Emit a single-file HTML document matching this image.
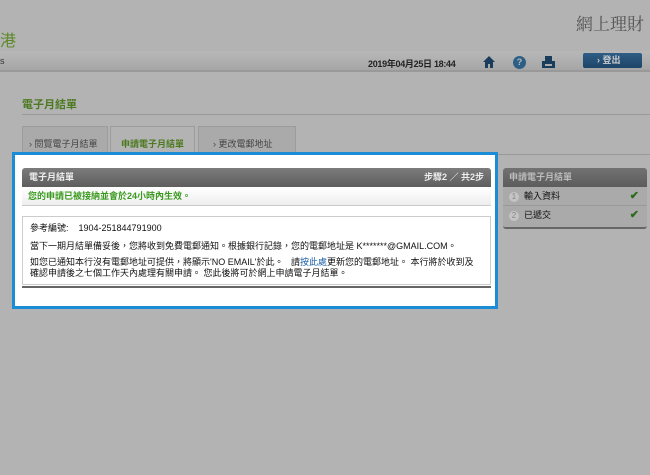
<!DOCTYPE html>
<html><head><meta charset="utf-8"><style>
*{margin:0;padding:0;box-sizing:border-box}
body{width:650px;height:475px;background:#b3b3b3;font-family:"Liberation Sans","Noto Sans CJK TC",sans-serif;font-size:9px;color:#111;position:relative;overflow:hidden}
.a{position:absolute}
</style></head><body>
<div class="a" style="left:576px;top:10px;font-size:17px;color:#555;font-family:'Noto Serif CJK SC',serif">網上理財</div>
<div class="a" style="left:0;top:27px;font-size:16px;color:#5e8a2a">港</div>
<div class="a" style="left:0;top:51px;width:650px;height:21px;background:linear-gradient(#b8b8b8,#a6a6a6);border-bottom:2px solid #999"></div>
<div class="a" style="left:0;top:56px;font-size:9px;color:#333">s</div>
<div class="a" style="left:368px;top:57px;font-size:9px;color:#222;font-weight:bold;letter-spacing:-0.3px">2019年04月25日 18:44</div>
<svg class="a" style="left:482px;top:55px" width="14" height="14" viewBox="0 0 14 14"><path d="M7 1L1 7h2v6h3V9h2v4h3V7h2z" fill="#1a3d5c"/></svg>
<div class="a" style="left:513px;top:56px;width:13px;height:13px;border-radius:50%;background:#2d5f86;color:#bbb;font-size:9px;font-weight:bold;text-align:center;line-height:13px">?</div>
<svg class="a" style="left:542px;top:55px" width="13" height="14" viewBox="0 0 13 14"><rect x="3" y="1" width="7" height="5" fill="#1a3d5c"/><rect x="0" y="6" width="13" height="7" fill="#1a3d5c"/><rect x="3" y="9" width="7" height="2" fill="#aaa"/></svg>
<div class="a" style="left:583px;top:53px;width:59px;height:15px;background:linear-gradient(#2f5d85,#1d4468);border-radius:2px;color:#ccc;font-size:9px;font-weight:bold;padding-left:14px;line-height:15px">› 登出</div>
<div class="a" style="left:22px;top:96px;font-size:11px;color:#4d7a20;font-weight:bold">電子月結單</div>
<div class="a" style="left:22px;top:114px;width:628px;height:1px;background:#999"></div>
<div class="a" style="left:22px;top:126px;width:86px;height:28px;background:#aaa;border:1px solid #9c9c9c;color:#444;font-size:9px;padding:10px 0 0 6px">› 閱覽電子月結單</div>
<div class="a" style="left:110px;top:126px;width:85px;height:28px;background:#b3b3b3;border:1px solid #9c9c9c;border-bottom:none;color:#4d7a20;font-weight:bold;font-size:9px;padding:10px 0 0 10px">申請電子月結單</div>
<div class="a" style="left:198px;top:126px;width:98px;height:28px;background:#aaa;border:1px solid #9c9c9c;color:#444;font-size:9px;padding:10px 0 0 14px">› 更改電郵地址</div>
<div class="a" style="left:497px;top:154px;width:153px;height:1px;background:#999"></div>
<div class="a" style="left:12px;top:152px;width:486px;height:157px;background:#fff;border:3px solid #1b8dd6"></div>
<div class="a" style="left:22px;top:168px;width:469px;height:19px;background:linear-gradient(#7c7c7c,#5e5e5e);border-radius:3px 3px 0 0;color:#eee;font-weight:bold;font-size:9px;line-height:19px;padding:0 7px">電子月結單<span style="float:right">步驟2 ／ 共2步</span></div>
<div class="a" style="left:22px;top:187px;width:469px;height:19px;background:linear-gradient(#fff,#eee);border-bottom:1px solid #ccc;color:#3a9a1e;font-weight:bold;font-size:9px;line-height:19px;padding:0 6px">您的申請已被接納並會於24小時內生效。</div>
<div class="a" style="left:22px;top:216px;width:469px;height:69px;border:1px solid #ccc;padding:5px 7px;font-size:9px;line-height:12px">
<div>參考編號:&nbsp;&nbsp;&nbsp; 1904-251844791900</div>
<div style="margin-top:6px">當下一期月結單備妥後，您將收到免費電郵通知。根據銀行記錄，您的電郵地址是 K*******@GMAIL.COM。</div>
<div style="margin-top:5px;line-height:11px">如您已通知本行沒有電郵地址可提供，將顯示'NO EMAIL'於此。&nbsp;&nbsp; 請<span style="color:#1b5fa8">按此處</span>更新您的電郵地址。 本行將於收到及<br>確認申請後之七個工作天內處理有關申請。 您此後將可於網上申請電子月結單。</div>
</div>
<div class="a" style="left:22px;top:286px;width:469px;height:2px;background:#666"></div>
<div class="a" style="left:503px;top:168px;width:144px;height:61px;background:#aaa;border-radius:3px;overflow:hidden;border-bottom:2px solid #666">
<div style="height:19px;background:linear-gradient(#727272,#5c5c5c);color:#bbb;font-weight:bold;font-size:9px;line-height:19px;padding-left:6px">申請電子月結單</div>
<div style="height:19px;border-bottom:1px solid #999;line-height:19px;padding-left:6px;font-size:9px;color:#111"><span style="display:inline-block;width:10px;height:10px;border-radius:50%;background:#c4c4c4;color:#888;font-size:8px;text-align:center;line-height:10px;margin-right:5px">1</span>輸入資料<span style="float:right;color:#2a6a1a;font-weight:bold;margin-right:8px;font-size:11px">✔</span></div>
<div style="height:19px;line-height:19px;padding-left:6px;font-size:9px;color:#111"><span style="display:inline-block;width:10px;height:10px;border-radius:50%;background:#c4c4c4;color:#888;font-size:8px;text-align:center;line-height:10px;margin-right:5px">2</span>已遞交<span style="float:right;color:#2a6a1a;font-weight:bold;margin-right:8px;font-size:11px">✔</span></div>
</div>
</body></html>
